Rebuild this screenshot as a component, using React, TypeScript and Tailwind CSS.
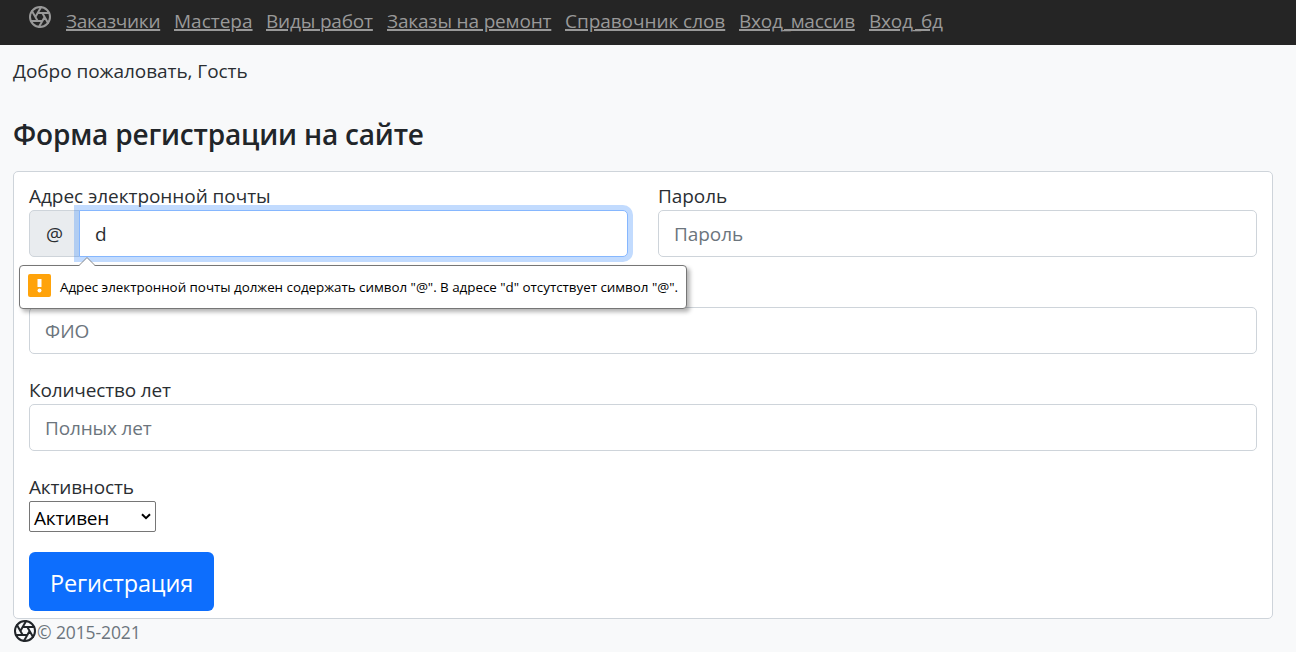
import { ReactNode } from "react";

const links = [
  { text: "Заказчики", cls: "w-[94px] tracking-[-0.28px]" },
  { text: "Мастера", cls: "w-[78px]" },
  { text: "Виды работ", cls: "w-[107px] tracking-[-0.18px]" },
  { text: "Заказы на ремонт", cls: "w-[164px] tracking-[-0.16px]" },
  { text: "Справочник слов", cls: "w-[160px] tracking-[-0.05px]" },
  { text: "Вход_массив", cls: "w-[116px] tracking-[-0.25px]" },
  { text: "Вход_бд", cls: "w-[74px] tracking-[-0.2px]" },
];

function Aperture({ className }: { className: string }) {
  return (
    <svg width="24" height="24" viewBox="0 0 24 24" fill="none" stroke="currentColor" strokeWidth="2" strokeLinecap="round" strokeLinejoin="round" className={className}>
      <circle cx="12" cy="12" r="10" />
      <path d="M14.31 8l5.74 9.94M9.69 8h11.48M7.38 12l5.74-9.94M9.69 16L3.95 6.06M14.31 16H2.83m13.79-4l-5.74 9.94" />
    </svg>
  );
}

function Field({ label, children, className = "" }: { label: string; children: ReactNode; className?: string }) {
  return (
    <div className={`flex flex-col ${className}`}>
      <label className="h-[30px] leading-[32px] whitespace-nowrap">{label}</label>
      {children}
    </div>
  );
}

const inputCls =
  "h-[47px] w-full min-w-0 rounded-[5px] border border-[#ced4da] bg-white px-[15px] text-[#212529] placeholder:text-[#6c757d] outline-none";

export default function App() {
  return (
    <div className="h-[652px] overflow-hidden bg-[#f8f9fa] font-['Open_Sans','Noto_Sans',sans-serif] text-[19px] font-normal text-[#2a2e32]">
      <header className="flex h-[45px] items-start bg-[#252525] pl-[28px] text-[#999]">
        <Aperture className="mt-[5px] shrink-0" />
        <nav className="ml-[14px] flex gap-[14px] pt-[6px] leading-[30px]">
          {links.map((l) => (
            <a key={l.text} href="#" className={`whitespace-nowrap underline decoration-2 underline-offset-1 ${l.cls}`}>
              {l.text}
            </a>
          ))}
        </nav>
      </header>
      <main className="px-[13px]">
        <p className="mt-[11px] h-[30px] leading-[30px] tracking-[-0.05px]">Добро пожаловать, Гость</p>
        <h1 className="mt-[30px] h-[37px] text-[28px] font-semibold leading-[36px] tracking-[-0.18px] text-[#212529]">Форма регистрации на сайте</h1>
        <form className="relative mt-[18px] h-[448px] w-[1260px] rounded-[5px] border border-[#ced4da] bg-white px-[15px] pt-[8px]">
          <div className="flex gap-[30px] tracking-[-0.05px]">
            <Field label="Адрес электронной почты" className="w-[599px]">
              <div className="flex">
                <span className="flex h-[47px] w-[51px] shrink-0 items-center justify-center rounded-l-[5px] border border-[#ced4da] bg-[#e9ecef] pt-[2px]">@</span>
                <input
                  defaultValue="d"
                  className="relative -ml-px h-[47px] min-w-0 flex-1 rounded-r-[5px] border border-[#86b7fe] bg-white px-[15px] shadow-[0_0_0_5px_rgba(13,110,253,0.25)] outline-none"
                />
              </div>
            </Field>
            <Field label="Пароль" className="w-[599px]">
              <input placeholder="Пароль" className={inputCls} />
            </Field>
          </div>
          <div className="mt-[50px]">
            <input placeholder="ФИО" aria-label="ФИО" className={inputCls} />
          </div>
          <Field label="Количество лет" className="mt-[20px] tracking-[-0.15px]">
            <input placeholder="Полных лет" className={inputCls} />
          </Field>
          <Field label="Активность" className="mt-[20px] tracking-[-0.18px]">
            <button type="button" className="flex h-[31px] w-[127px] items-center justify-between rounded-[2px] border border-[#767676] bg-white pl-[4px] pr-[4px] text-black">
              <span className="pt-[4px] leading-[27px]">Активен</span>
              <svg width="10" height="7" viewBox="0 0 10 7" fill="none" stroke="currentColor" strokeWidth="2">
                <path d="M1 1.2l4 4 4-4" />
              </svg>
            </button>
          </Field>
          <button type="button" className="mt-[20px] flex h-[59px] w-[185px] items-center justify-center rounded-[6px] bg-[#0d6efd] pt-[4px] text-[23.5px] tracking-[-0.15px] text-white">
            Регистрация
          </button>
          <div className="absolute left-[5px] top-[93px] flex h-[44px] w-[668px] items-center rounded-[4px] border border-[#767676] bg-white pl-[8px] text-[13.4px] tracking-[-0.025px] text-black shadow-[3px_3px_4px_rgba(0,0,0,0.3)]">
            <svg width="18" height="9" viewBox="0 0 18 9" className="absolute -top-[9px] left-[58px]">
              <path d="M1 9l8-8 8 8z" fill="#fff" />
              <path d="M1 8.5l8-8 8 8" fill="none" stroke="#8a8a8a" />
            </svg>
            <span className="mb-[3px] flex h-[23px] w-[23px] shrink-0 items-center justify-center rounded-[2px] bg-[#ffa30a]">
              <svg width="5" height="14" viewBox="0 0 5 14" fill="#fff">
                <path d="M.5 0h4v8h-4z" />
                <circle cx="2.5" cy="11.5" r="2" />
              </svg>
            </span>
            <span className="ml-[9px] whitespace-nowrap">Адрес электронной почты должен содержать символ "@". В адресе "d" отсутствует символ "@".</span>
          </div>
        </form>
        <footer className="flex h-[24px] text-[17.5px] tracking-[-0.1px] text-[#6c757d]">
          <Aperture className="shrink-0 text-[#212529]" />
          <span className="leading-[26px]">© 2015-2021</span>
        </footer>
      </main>
    </div>
  );
}
